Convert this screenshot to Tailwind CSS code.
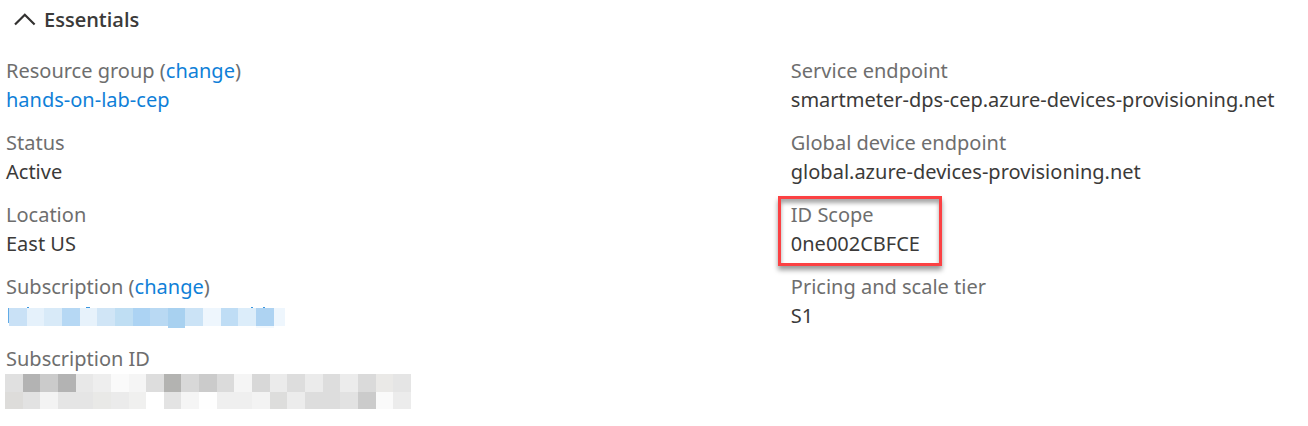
<!DOCTYPE html>
<html lang="en">
<head>
<meta charset="utf-8">
<meta name="viewport" content="width=device-width, initial-scale=1">
<title>Essentials</title>
<script src="https://cdn.jsdelivr.net/npm/@tailwindcss/browser@4"></script>
</head>
<body class="min-h-screen bg-white font-['Segoe_UI','Noto_Sans',sans-serif] text-[20px] leading-[29px] text-[#3b3a39]">
<main>
  <h2>
    <button type="button" aria-expanded="true" aria-controls="essentials" class="flex items-center gap-2 pt-[5px] pl-3.5 font-['Segoe_UI','Open_Sans',sans-serif] font-semibold">
      <svg class="h-[14px] w-[22px]" viewBox="0 0 22 14" fill="none" stroke="#323130" stroke-width="2.2" aria-hidden="true"><path d="M1 11.5 10.8 1.8 20.6 11.5"/></svg>
      <span>Essentials</span>
    </button>
  </h2>
  <div id="essentials" class="grid grid-cols-[3fr_2fr] pt-[22px]">
    <dl class="flex flex-col gap-3.5 pl-1.5">
      <div>
        <dt class="text-[#6e6e6e]">Resource group (<a href="#" class="text-[#0f7fd8]">change</a>)</dt>
        <dd><a href="#" class="text-[#0f7fd8]">hands-on-lab-cep</a></dd>
      </div>
      <div>
        <dt class="text-[#6e6e6e]">Status</dt>
        <dd>Active</dd>
      </div>
      <div>
        <dt class="text-[#6e6e6e]">Location</dt>
        <dd>East US</dd>
      </div>
      <div>
        <dt class="text-[#6e6e6e]">Subscription (<a href="#" class="text-[#0f7fd8]">change</a>)</dt>
        <dd class="h-[29px] pt-1">
          <svg class="h-[24px] w-[280px]" viewBox="6 305 280 24" shape-rendering="crispEdges" role="img" aria-label="Redacted subscription">
            <path fill="#62abe6" d="M8 308h1v15h-1z"/>
            <path fill="#3a96df" d="M27 307h2v1h-2zM86 307h4v1h-4zM251 307h2v1h-2zM263 307h2v1h-2z"/>
            <path fill="#c9e1f6" d="M9 308h18v18H9z"/>
            <path fill="#e5f1fb" d="M27 308h17v18H27z"/>
            <path fill="#d8eaf8" d="M44 308h18v18H44z"/>
            <path fill="#b6d8f4" d="M62 308h18v18H62z"/>
            <path fill="#e7f2fb" d="M80 308h17v18H80z"/>
            <path fill="#d0e5f6" d="M97 308h18v18H97z"/>
            <path fill="#bfdef3" d="M115 308h18v18h-18z"/>
            <path fill="#acd3f3" d="M133 308h17v18h-17z"/>
            <path fill="#b9d9f3" d="M150 308h18v18h-18z"/>
            <path fill="#a8d1f0" d="M168 308h17v20h-17z"/>
            <path fill="#cbe3f6" d="M185 308h18v18h-18z"/>
            <path fill="#eef6fd" d="M203 308h18v18h-18z"/>
            <path fill="#bfddf5" d="M221 308h17v18h-17z"/>
            <path fill="#dcedfa" d="M238 308h18v18h-18z"/>
            <path fill="#aed3f2" d="M256 308h18v18h-18z"/>
            <path fill="#eef6fd" d="M274 308h11v18h-11z"/>
            <path fill="#f3f9fe" d="M256 326h18v2h-18z"/>
          </svg>
        </dd>
      </div>
      <div>
        <dt class="text-[#6e6e6e]">Subscription ID</dt>
        <dd>
          <svg class="-ml-px h-[36px] w-[406px]" viewBox="5 373 406 36" shape-rendering="crispEdges" role="img" aria-label="Redacted subscription ID">
            <path fill="#e0e0e0" d="M5 374h18v18H5z"/><path fill="#b3b3b3" d="M23 374h17v18H23z"/>
            <path fill="#cbcbcb" d="M40 374h18v18H40z"/><path fill="#b3b3b3" d="M58 374h18v18H58z"/>
            <path fill="#e8e8e8" d="M76 374h17v18H76z"/><path fill="#eeeeee" d="M93 374h18v18H93z"/>
            <path fill="#fafafa" d="M111 374h18v18h-18z"/><path fill="#f5f5f5" d="M129 374h17v18h-17z"/>
            <path fill="#dddddd" d="M146 374h18v18h-18z"/><path fill="#b3b3b1" d="M164 374h17v18h-17z"/>
            <path fill="#d8d8d8" d="M181 374h18v18h-18z"/><path fill="#cbcbcb" d="M199 374h18v18h-18z"/>
            <path fill="#dbdbdb" d="M217 374h17v18h-17z"/><path fill="#f5f5f5" d="M234 374h18v18h-18z"/>
            <path fill="#d8d8d8" d="M252 374h18v18h-18z"/><path fill="#ebebeb" d="M270 374h17v18h-17z"/>
            <path fill="#dddddd" d="M287 374h18v18h-18z"/><path fill="#ebebeb" d="M305 374h18v18h-18z"/>
            <path fill="#dddddd" d="M323 374h17v18h-17z"/><path fill="#ececec" d="M340 374h18v18h-18z"/>
            <path fill="#dadada" d="M358 374h18v18h-18z"/><path fill="#eae9e7" d="M376 374h17v18h-17z"/>
            <path fill="#e5e5e5" d="M393 374h18v18h-18z"/>
            <path fill="#dddcda" d="M5 392h18v17H5z"/><path fill="#e2e2e2" d="M23 392h17v17H23z"/>
            <path fill="#f3f3f3" d="M40 392h18v17H40z"/><path fill="#e5e5e5" d="M58 392h35v17H58z"/>
            <path fill="#e9e9e7" d="M93 392h18v17H93z"/><path fill="#ebebeb" d="M111 392h18v17h-18z"/>
            <path fill="#f0f0ef" d="M129 392h17v17h-17z"/><path fill="#e3e3e3" d="M164 392h17v17h-17z"/>
            <path fill="#f5f5f5" d="M181 392h18v17h-18z"/><path fill="#fefefe" d="M199 392h18v17h-18z"/>
            <path fill="#efefef" d="M217 392h35v17h-35z"/><path fill="#f3f3f3" d="M252 392h18v17h-18z"/>
            <path fill="#dddddc" d="M270 392h17v17h-17z"/><path fill="#ececec" d="M287 392h18v17h-18z"/>
            <path fill="#dddddd" d="M305 392h35v17h-35z"/><path fill="#e2e2e2" d="M340 392h18v17h-18z"/>
            <path fill="#cbcbcb" d="M358 392h18v17h-18z"/><path fill="#fafafa" d="M376 392h17v17h-17z"/>
            <path fill="#ececec" d="M393 392h18v17h-18z"/>
          </svg>
        </dd>
      </div>
    </dl>
    <dl class="flex flex-col gap-3.5 pl-1.5">
      <div>
        <dt class="text-[#6e6e6e]">Service endpoint</dt>
        <dd>smartmeter-dps-cep.azure-devices-provisioning.net</dd>
      </div>
      <div>
        <dt class="text-[#6e6e6e]">Global device endpoint</dt>
        <dd>global.azure-devices-provisioning.net</dd>
      </div>
      <div class="relative">
        <dt class="text-[#6e6e6e]">ID Scope</dt>
        <dd>0ne002CBFCE</dd>
        <div class="absolute -top-1 -left-[13px] h-[70px] w-[164px] border-3 border-[#fb4143] shadow-[0_4px_5px_rgba(0,0,0,0.4),inset_0_4px_4px_rgba(0,0,0,0.35)]" aria-hidden="true"></div>
      </div>
      <div>
        <dt class="text-[#6e6e6e]">Pricing and scale tier</dt>
        <dd>S1</dd>
      </div>
    </dl>
  </div>
</main>
</body>
</html>
